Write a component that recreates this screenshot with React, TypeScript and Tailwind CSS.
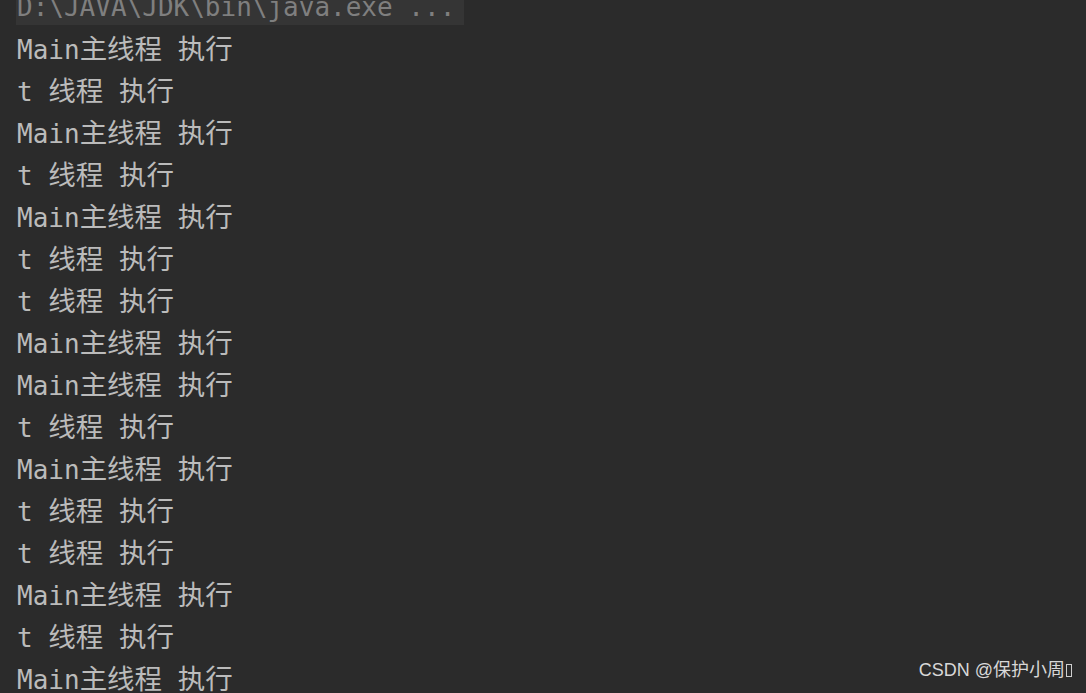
import React from 'react'

const lines = [
  'Main主线程 执行',
  't 线程 执行',
  'Main主线程 执行',
  't 线程 执行',
  'Main主线程 执行',
  't 线程 执行',
  't 线程 执行',
  'Main主线程 执行',
  'Main主线程 执行',
  't 线程 执行',
  'Main主线程 执行',
  't 线程 执行',
  't 线程 执行',
  'Main主线程 执行',
  't 线程 执行',
  'Main主线程 执行',
]

// 中文字符在 IDE 控制台里比等宽字体略宽
function Line({ text }: { text: string }) {
  const parts = text.split(/([\u4e00-\u9fff]+)/).filter(Boolean)
  return (
    <div className="h-[42px] whitespace-pre pl-px">
      {parts.map((p, i) =>
        /[\u4e00-\u9fff]/.test(p) ? (
          <span key={i} className="text-[27.5px]">
            {p}
          </span>
        ) : (
          <span key={i}>{p}</span>
        ),
      )}
    </div>
  )
}

export default function App() {
  return (
    <div className="relative h-[693px] w-[1086px] overflow-hidden bg-[#2b2b2b]">
      <div
        className="-mt-[14px] pl-4 text-[26px] leading-[42px] text-[#bbbbbb]"
        style={{ fontFamily: '"DejaVu Sans Mono", "Noto Sans CJK SC", monospace' }}
      >
        <div className="h-[42px]">
          <span className="inline-block h-[39px] w-[448px] overflow-hidden whitespace-pre bg-[#353535] pl-px align-top text-[#7f7f7f]">
            D:\JAVA\JDK\bin\java.exe ...
          </span>
        </div>
        {lines.map((line, i) => (
          <Line key={i} text={line} />
        ))}
      </div>

      {/* 水印 */}
      <div
        className="absolute bottom-[9px] right-[14px] flex items-center text-[18px] text-[#d8d8d8]"
        style={{ fontFamily: '"Liberation Sans", "Noto Sans CJK SC", sans-serif' }}
      >
        CSDN @保护小周
        <span className="ml-px inline-block h-[13px] w-[6px] border border-[#cfcfcf]" />
      </div>
    </div>
  )
}
